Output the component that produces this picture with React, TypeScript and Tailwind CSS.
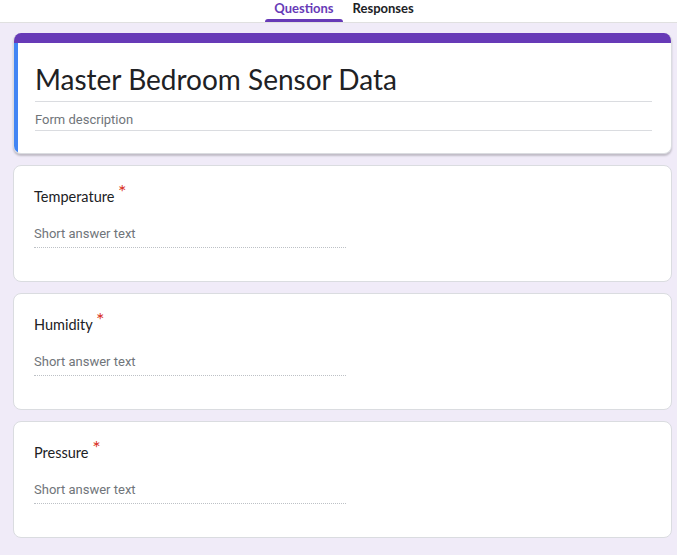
export default function App() {
  const questions = ["Temperature", "Humidity", "Pressure"];

  return (
    <div
      className="min-h-[555px] bg-[#f0ebf8] pb-4"
      style={{ fontFamily: "Roboto, 'Liberation Sans', sans-serif" }}
    >
      {/* tabs */}
      <div className="h-[23px] bg-white border-b border-[#e0e0e0] flex justify-center gap-[10px] pl-[2px]">
        <div className="relative flex flex-col items-center px-[9px]">
          <span className="text-[13px] leading-[16px] font-bold text-[#673ab7] font-['Lato',sans-serif]">
            Questions
          </span>
          <div className="absolute bottom-0 left-0 right-0 h-[3px] rounded-t-[3px] bg-[#673ab7]" />
        </div>
        <div className="flex flex-col items-center">
          <span className="text-[13px] leading-[16px] font-bold text-[#202124] font-['Lato',sans-serif]">
            Responses
          </span>
        </div>
      </div>

      <div className="ml-[13px] w-[659px] flex flex-col gap-[11px] mt-[10px]">
        {/* title card */}
        <div className="rounded-lg overflow-hidden bg-white shadow-[0_2px_2px_rgba(0,0,0,0.2)] border border-[#dadce0] border-t-0">
          <div className="h-[10px] bg-[#673ab7]" />
          <div className="flex">
            <div className="w-[4px] bg-[#4285f4]" />
            <div className="flex-1 pl-[17px] pr-[19px] pt-[15px] pb-[22px]">
              <div className="text-[28px] leading-[42px] text-[#202124] border-b border-[#dadce0] pb-[1px] font-['Lato',sans-serif]">
                Master Bedroom Sensor Data
              </div>
              <div className="mt-[8px] text-[13px] leading-[20px] text-[#70757a] border-b border-[#dadce0]">
                Form description
              </div>
            </div>
          </div>
        </div>

        {questions.map((q) => (
          <div
            key={q}
            className="h-[117px] rounded-lg bg-white border border-[#dadce0] pl-[20px] pt-[18px]"
          >
            <div className="text-[14.5px] leading-[24px] text-[#202124] font-['Lato',sans-serif]">
              {q}{" "}
              <span className="relative -top-[3px] text-[20px] leading-none text-[#d93025]">*</span>
            </div>
            <div className="mt-[15px] w-[312px] text-[13px] leading-[20px] text-[#70757a] border-b border-dotted border-[#bdc1c6] pb-[3px]">
              Short answer text
            </div>
          </div>
        ))}
      </div>
    </div>
  );
}
